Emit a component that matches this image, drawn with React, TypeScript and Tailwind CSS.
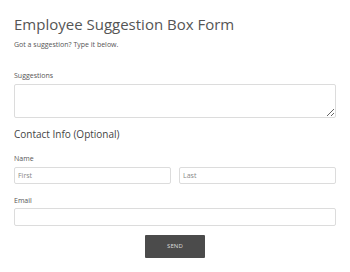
export default function App() {
  return (
    <div className="w-[350px] h-[272px] bg-white px-[14px] pt-[14px] text-[#555] font-['Open_Sans',sans-serif]">
      <h1 className="text-[15px] leading-[20px] font-normal text-[#555]">Employee Suggestion Box Form</h1>
      <p className="mt-[6px] text-[7px] leading-[10px] text-[#555]">Got a suggestion? Type it below.</p>

      <label className="block mt-[21px] text-[7px] leading-[10px] text-[#555]">Suggestions</label>
      <textarea className="block mt-[3px] w-full h-[34px] border border-[#dcdcdc] rounded-[2px] resize-y outline-none" />

      <h2 className="mt-[9px] text-[10px] leading-[14px] font-normal text-[#444]">Contact Info (Optional)</h2>

      <label className="block mt-[13px] text-[7px] leading-[10px] text-[#555]">Name</label>
      <div className="mt-[3px] grid grid-cols-2 gap-[8px]">
        <input placeholder="First" className="h-[17px] border border-[#dcdcdc] rounded-[2px] px-[3px] text-[7px] placeholder:text-[#888] outline-none" />
        <input placeholder="Last" className="h-[17px] border border-[#dcdcdc] rounded-[2px] px-[3px] text-[7px] placeholder:text-[#888] outline-none" />
      </div>

      <label className="block mt-[12px] text-[7px] leading-[10px] text-[#555]">Email</label>
      <input className="block mt-[2px] w-full h-[18px] border border-[#dcdcdc] rounded-[2px] outline-none" />

      <div className="mt-[9px] flex justify-center">
        <button className="w-[60px] h-[23px] bg-[#4b4b4b] text-[#ddd] text-[6px] tracking-wide rounded-[1px]">SEND</button>
      </div>
    </div>
  );
}
